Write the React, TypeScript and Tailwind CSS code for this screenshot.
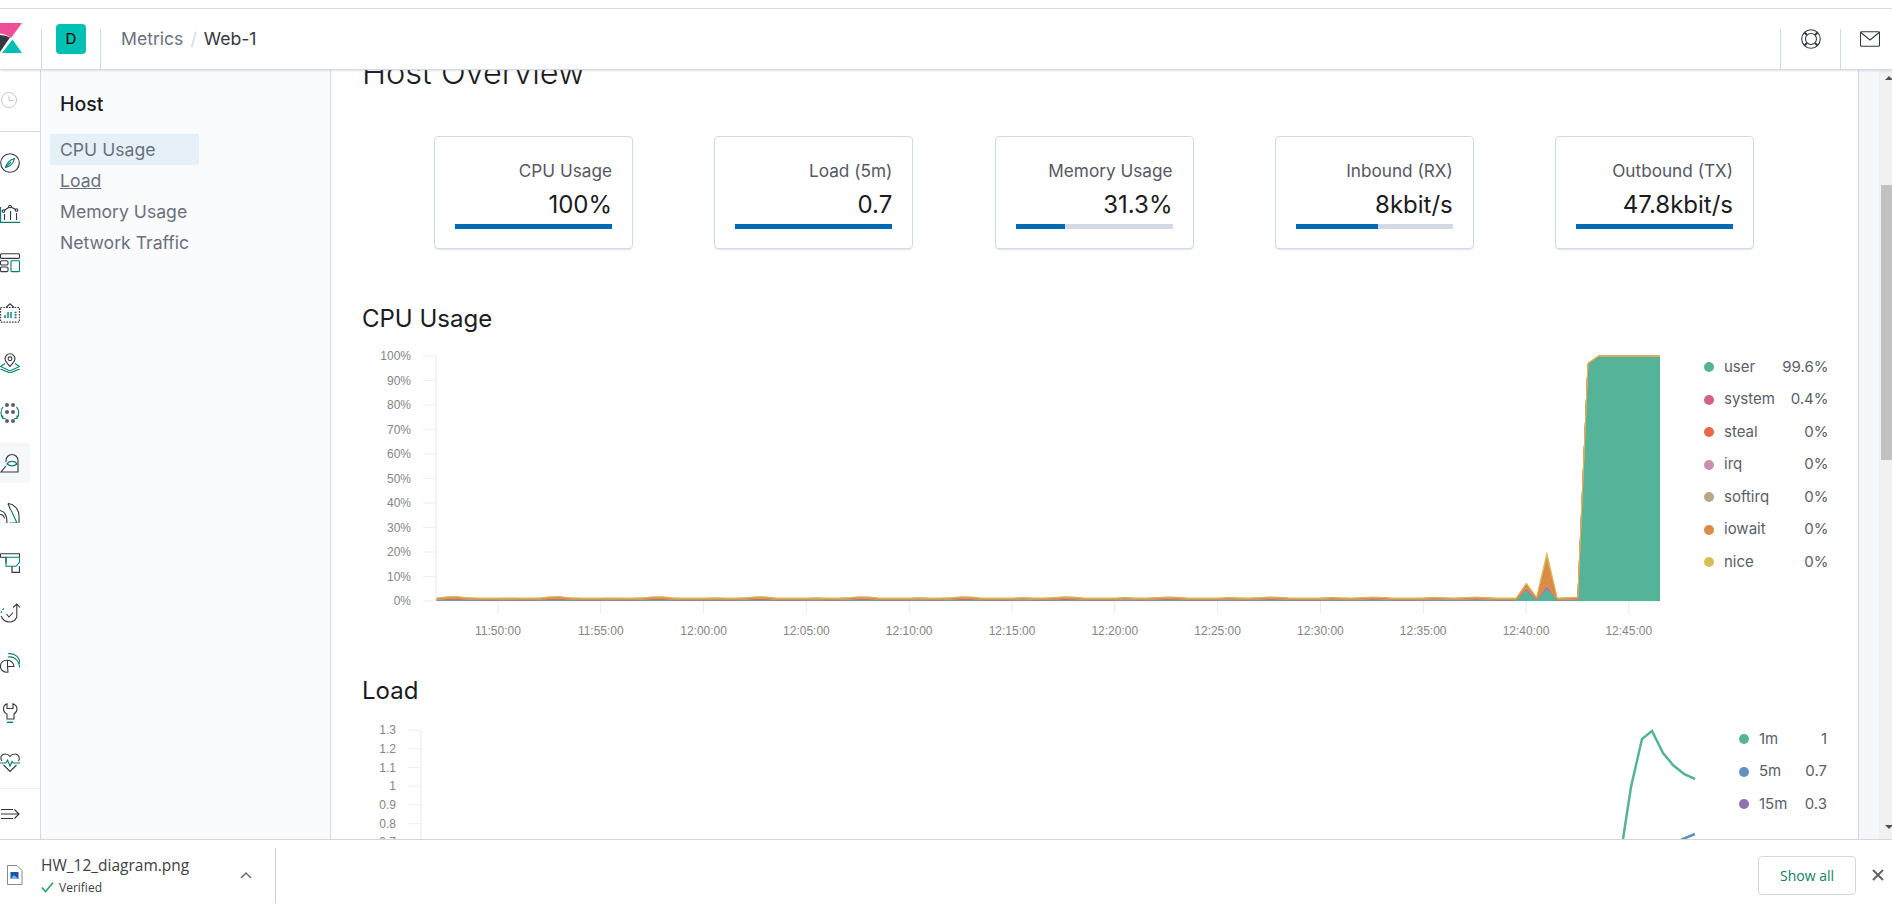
import React from "react";

const D = "#343741";
const T = "#017D73";

function Ico({ children, size = 20 }: { children: React.ReactNode; size?: number }) {
  return (
    <svg width={size} height={size} viewBox="0 0 20 20" fill="none" stroke={D} strokeWidth={1.1}>
      {children}
    </svg>
  );
}

const navIcons: React.ReactNode[] = [
  <Ico key="discover">
    <circle cx="10" cy="10" r="9.3" />
    <path d="M14.5 5.5C10.5 6.5 7 9.5 5.5 14.5 10 13.5 13.5 10.5 14.5 5.5Z" stroke={T} />
    <path d="M5.5 14.5 11 9" stroke={T} />
  </Ico>,
  <Ico key="viz">
    <path d="M.6 4v15.4H20" stroke={T} />
    <path d="M3.5 8 10 3.5 16.5 7" />
    <circle cx="3.5" cy="8" r="1.3" fill="#fff" />
    <circle cx="10" cy="3.5" r="1.3" fill="#fff" />
    <circle cx="16.5" cy="7" r="1.3" fill="#fff" />
    <path d="M4.5 11v6M10.5 8v9M16.500 10v7" />
  </Ico>,
  <Ico key="dash">
    <rect x=".5" y=".8" width="19" height="4.6" rx="1.2" />
    <rect x=".5" y="7.8" width="7.5" height="4.2" rx="1.2" />
    <rect x=".5" y="14" width="7.5" height="4.6" rx="1.2" />
    <rect x="11" y="7.8" width="8.5" height="10.8" rx=".8" stroke={T} />
  </Ico>,
  <Ico key="canvas">
    <path d="M.6 4.5h18.8v14.6H.6Z" strokeDasharray="1.6 1.2" />
    <path d="M6 4.5 10 .8l4 3.7" />
    <path d="M5 15v-3M8 15V9M11 15v-6M14.5 9.5h2M14.5 12h2M14.5 14.500h2" stroke={T} strokeWidth={1.4} />
  </Ico>,
  <Ico key="maps">
    <path d="M10 13.500C7.500 10.500 5 8.500 5 5.800a5 5 0 0 1 10 0c0 2.700-2.500 4.700-5 7.700Z" />
    <circle cx="10" cy="5.800" r="1.900" />
    <path d="m5 10.500-4.500 3L10 18l9.500-4.500-4.500-3" stroke={T} />
    <path d="m.5 16 9.500 4 9.500-4" stroke={T} />
  </Ico>,
  <Ico key="ml">
    <g fill="#5a5f69" stroke="none">
      <circle cx="7" cy="2" r="2" />
      <circle cx="13" cy="2" r="2" />
      <circle cx="7" cy="9" r="2" />
      <circle cx="13" cy="9" r="2" />
      <circle cx="7" cy="18" r="2" />
      <circle cx="13" cy="18" r="2" />
    </g>
    <path d="M3 4C.5 7 .2 12 2.800 15.500m0-3v3h3M16.500 4c2.800 3 3 8 .5 11.500m0-3v3h-3" stroke={T} />
  </Ico>,
  <Ico key="metrics">
    <path d="M6 9V7.500a6 6 0 0 1 12 0V19H1L6 13" />
    <path d="M7 11C9 7.500 15 7.500 17 11 14 13.200 10 13.200 7 11Z" stroke={T} strokeWidth={1.3} />
  </Ico>,
  <Ico key="logs">
    <path d="M8 .5C14 1 19 6 19 13V20" />
    <path d="M8 .5 10.500 7" />
    <path d="M11 7 17 20H9.500" stroke={T} />
    <path d="M0 7.500C4 8 7 12 7 20M0 11.500C2.500 11.500 4 13 4.500 15.500" />
  </Ico>,
  <Ico key="apm">
    <path d="M.5.800h19v3.500M.5.800v3.500h5.500v6" />
    <path d="M6 4.300h13.500v5l-3.500 4H6Z" stroke={T} />
    <path d="M12 13.500v5.800h7.500v-6" strokeWidth={1.2} />
  </Ico>,
  <Ico key="uptime">
    <path d="M4 5.500A8 8 0 0 0 1 10" stroke={T} strokeDasharray="2 1.500" />
    <path d="M1.200 13c1.300 3.600 4.500 6 8.300 6 3.500 0 6-2 7.300-5" />
    <path d="M16.800 14V1M13 4.500 16.800 1l3.200 3.500" />
    <path d="m6.500 11 2.500 3 4-4.500" />
  </Ico>,
  <Ico key="siem">
    <path d="M7.500 7.300A6 6 0 1 0 8 19l-.5-5.500H14A6.300 6.300 0 0 0 7.500 7.300Z" />
    <path d="M7.500 7.500V14" />
    <path d="M8 4c6-1 11 3 11.700 10.500M8 .800C15-.5 20 5 20 11" stroke={T} />
  </Ico>,
  <Ico key="dev">
    <path d="M7 .800V5.500h6V.800c2 .8 4 2.700 4 5.200 0 2.500-1.500 4-3 5v5H7v-5C5 10 3.500 8.500 3.500 6 3.500 3.500 5 1.500 7 .800Z" />
    <path d="M7 19.300h6" stroke={T} strokeWidth={1.400} />
  </Ico>,
  <Ico key="heart">
    <path d="M1.800 8C-.5 4 2 1 5 1c2 0 4 1 5 2.500C11 2 13 1 15 1c3 0 5.500 3 3.500 7M3.500 12l6.500 6.500 6.500-6.500" />
    <path d="M0 10h6l1.500-3 2.500 6 2-4.500 1 1.500h7" stroke={T} />
  </Ico>,
];

const W = 10.28;
function band(i: number) {
  const w = Math.max(0, Math.sin(i * 0.95) * Math.sin(i * 0.31));
  return [0.3, 0.18 + w * 0.2, 0.08 + w * 0.3, 0.04, 0.06, 0.35 + w * 0.15, 0.2];
}
function cpuData() {
  const rows: { x: number; v: number[] }[] = [];
  for (let k = 119; k >= 0; k--) {
    const x = 1660 - W * k;
    let v = band(k);
    if (k <= 7) v = k === 7 ? [96.400, 0.3, 0, 0, 0.1, 0.2, 0.2] : [99.600, 0.3, 0, 0, 0, 0, 0.1];
    if (k === 11) v = [5, 1.1, 0.1, 0.1, 0.1, 11.300, 2];
    if (k === 13) v = [4.300, 0.7, 0.1, 0.1, 0.1, 1.500, 0.6];
    rows.push({ x, v });
  }
  return rows;
}
const cols = ["#54B399", "#D36086", "#E7664C", "#CA8EAE", "#B9A888", "#DA8B45", "#D6BF57"];

function CpuChart() {
  const rows = cpuData();
  const y = (p: number) => 601 - p * 2.45;
  const layers = cols.map((c, s) => {
    const sum = (r: { v: number[] }, n: number) => r.v.slice(0, n).reduce((a, b) => a + b, 0);
    const top = rows.map((r) => `${r.x.toFixed(1)},${y(sum(r, s + 1)).toFixed(1)}`);
    const bot = rows.map((r) => `${r.x.toFixed(1)},${y(sum(r, s)).toFixed(1)}`).reverse();
    return (
      <g key={c}>
        <polygon points={[...top, ...bot].join(" ")} fill={c} />
        <polyline points={top.join(" ")} fill="none" stroke={c} strokeWidth={1} />
      </g>
    );
  });
  const times = ["11:50:00", "11:55:00", "12:00:00", "12:05:00", "12:10:00", "12:15:00", "12:20:00", "12:25:00", "12:30:00", "12:35:00", "12:40:00", "12:45:00"];
  return (
    <svg width="1338" height="300" viewBox="362 340 1338 300" className="shrink-0">
      <path d="M436 356V601H1660" stroke="#f0f0f0" strokeWidth={1.500} fill="none" />
      {Array.from({ length: 11 }).map((_, i) => {
        const yy = 601 - i * 24.5;
        return (
          <g key={i}>
            <path d={`M423 ${yy}H436`} stroke="#f0f0f0" strokeWidth={1.200} />
            <text x="411" y={yy + 4} textAnchor="end" fontSize="12" fill="#858585" fontFamily="Liberation Sans">{`${i * 10}%`}</text>
          </g>
        );
      })}
      {times.map((t, i) => {
        const x = 498 + i * 102.8;
        return (
          <g key={t}>
            <path d={`M${x} 601V613`} stroke="#eaeaea" strokeWidth={1} />
            <text x={x} y="635" textAnchor="middle" fontSize="12" fill="#858585" fontFamily="Liberation Sans">{t}</text>
          </g>
        );
      })}
      {layers}
    </svg>
  );
}

function LoadChart() {
  const ticks = ["0.7", "0.8", "0.9", "1", "1.1", "1.2", "1.3"];
  return (
    <svg width="1338" height="130" viewBox="362 720 1338 130" className="shrink-0">
      <path d="M421 730V850" stroke="#f0f0f0" strokeWidth={1.500} fill="none" />
      {ticks.map((t, i) => {
        const yy = 842.300 - i * 18.7;
        return (
          <g key={t}>
            <path d={`M408 ${yy}H421`} stroke="#f0f0f0" strokeWidth={1.200} />
            <text x="396" y={yy + 4} textAnchor="end" fontSize="12" fill="#858585" fontFamily="Liberation Sans">{t}</text>
          </g>
        );
      })}
      <polyline points="1621,850 1623,839 1631,787 1642,739 1652,731 1663,753 1673,765 1684,774 1695,779" fill="none" stroke="#54B399" strokeWidth={2.5} />
      <polyline points="1662,850 1673,844 1683,839 1695,834" fill="none" stroke="#6092C0" strokeWidth={2.5} />
    </svg>
  );
}

function Legend({ rows, className }: { rows: [string, string, string][]; className: string }) {
  return (
    <div className={`flex flex-col shrink-0 text-[15px] text-[#5a5e68] ${className}`}>
      {rows.map(([c, n, v]) => (
        <div key={n} className="flex items-center h-[32.5px]">
          <span className="w-[10px] h-[10px] rounded-full mr-[10px] shrink-0" style={{ backgroundColor: c }} />
          <span>{n}</span>
          <span className="ml-auto">{v}</span>
        </div>
      ))}
    </div>
  );
}

function Card({ label, value, pct }: { label: string; value: string; pct: number }) {
  return (
    <div className="w-[199px] h-[113px] shrink-0 border border-[#d3dae6] rounded-[4px] bg-white shadow-[0_2px_2px_-1px_rgba(152,162,179,0.3)] pl-[20px] pr-[20px] pt-[23px] flex flex-col items-end">
      <div className="text-[17.2px] leading-[22px] text-[#545863]">{label}</div>
      <div className="text-[24px] leading-[30px] mt-[8px] text-[#1a1c21]">{value}</div>
      <div className="w-full h-[5px] mt-[4px] shrink-0 bg-[#d3dae6]">
        <div className="h-full bg-[#006bb4]" style={{ width: `${pct}%` }} />
      </div>
    </div>
  );
}

export default function App() {
  return (
    <div className="w-[1892px] h-[910px] flex flex-col overflow-hidden bg-white font-['Inter',sans-serif]">
      <div className="h-[9px] shrink-0 border-b border-[#dddddd] bg-white" />
      {/* header */}
      <header className="h-[61px] shrink-0 flex bg-white border-b border-[#d3dae6] shadow-[0_2px_2px_-1px_rgba(152,162,179,0.3)] relative z-10">
        <div className="w-[41px] h-[60px] shrink-0 relative overflow-hidden">
          <svg width="24" height="32" viewBox="0 23 24 32" className="mt-[14px]">
            <path d="M0 23H22L11 38Q6 34 0 33.500Z" fill="#F04E98" />
            <path d="M0 35Q6 35 10 37.500L0 52Z" fill="#343741" />
            <path d="M12.500 39.500 22 53H2Z" fill="#00BFB3" />
          </svg>
        </div>
        <div className="w-[60px] shrink-0 mt-[20px] border-l border-r border-[#d3dae6] relative">
          <div className="absolute left-[14px] -top-[5px] w-[30px] h-[30px] rounded-[4px] bg-[#00BFB3] flex items-center justify-center text-[15px] text-black">D</div>
        </div>
        <div className="flex items-center text-[17.6px] pl-[20px] pt-[1px] h-[60px]">
          <span className="text-[#69707d]">Metrics</span>
          <span className="text-[#d3dae6] mx-[7px]">/</span>
          <span className="text-[#343741]">Web-1</span>
        </div>
        <div className="ml-auto flex mt-[20px]">
          <div className="w-[60px] h-[40px] border-l border-[#d3dae6] flex justify-center">
            <svg width="20" height="20" viewBox="0 0 20 20" fill="none" stroke={D} strokeWidth={1.100}>
              <circle cx="10" cy="10" r="9.300" />
              <circle cx="10" cy="10" r="5.500" />
              <path d="M3.500 3.500 6 6M16.500 3.500 14 6M3.500 16.500 6 14M16.500 16.500 14 14" strokeWidth={2} />
            </svg>
          </div>
          <div className="w-[52px] h-[40px] border-l border-[#d3dae6] flex justify-start pl-[19px]">
            <svg width="20" height="16" viewBox="0 0 20 16" fill="none" stroke={D} strokeWidth={1.100} className="mt-[2px]">
              <rect x=".5" y=".8" width="19" height="14.400" rx="1" />
              <path d="M.8 1.500 10 9l9.200-7.500" />
            </svg>
          </div>
        </div>
      </header>

      {/* body */}
      <div className="flex-1 min-h-0 flex">
        {/* nav */}
        <nav className="w-[41px] shrink-0 bg-white border-r border-[#d3dae6] flex flex-col">
          <div className="h-[62px] shrink-0 border-b border-[#d3dae6] flex items-center">
            <svg width="16" height="16" viewBox="0 0 16 16" fill="none" stroke="#c4c6ca" strokeWidth={1} className="ml-[1px] mt-[-1px]">
              <circle cx="8" cy="8" r="7.500" />
              <path d="M8 3.500V8.500H12" />
            </svg>
          </div>
          <div className="h-[6px] shrink-0" />
          <div className="flex flex-col h-[650px] shrink-0">
            {navIcons.map((ic, i) => (
              <div key={i} className="h-[50px] flex items-center shrink-0">
                <div className={`w-[30px] h-[40px] flex items-center rounded-r-[4px] ${i === 6 ? "bg-[#f5f7fa]" : ""}`}>{ic}</div>
              </div>
            ))}
          </div>
          <div className="h-[50px] shrink-0 border-t border-[#eef1f5] flex items-center">
            <svg width="20" height="14" viewBox="0 0 20 14" fill="none" stroke={D} strokeWidth={1.100}>
              <path d="M1 2.500H13M1 7H18.500M1 11.500H13M14.500 2.500 19 7l-4.500 4.500" />
            </svg>
          </div>
        </nav>

        {/* sub nav */}
        <aside className="w-[290px] shrink-0 bg-[#fafbfd] border-r border-[#d3dae6] pl-[9px] pt-[22px]">
          <div className="pl-[10px] text-[19.5px] leading-[24px] font-medium text-[#1a1c21] mb-[18px]">Host</div>
          <div className="flex flex-col text-[17.6px] text-[#69707d]">
            <div className="w-[149px] h-[31px] pl-[10px] pt-[1px] flex items-center bg-[#e6f0f8] whitespace-nowrap">CPU Usage</div>
            <div className="w-[149px] h-[31px] pl-[10px] pt-[1px] flex items-center underline">Load</div>
            <div className="w-[149px] h-[31px] pl-[10px] pt-[1px] flex items-center whitespace-nowrap">Memory Usage</div>
            <div className="w-[149px] h-[31px] pl-[10px] pt-[1px] flex items-center whitespace-nowrap">Network Traffic</div>
          </div>
        </aside>

        {/* main */}
        <main className="flex-1 min-w-0 bg-white overflow-hidden pl-[31px]">
          <h1 className="-mt-[17px] h-[40px] text-[32.5px] leading-[40px] font-light text-[#1a1c21] whitespace-nowrap">Host Overview</h1>
          <div className="flex gap-[81.250px] ml-[72px] mt-[43px]">
            <Card label="CPU Usage" value="100%" pct={100} />
            <Card label="Load (5m)" value="0.7" pct={100} />
            <Card label="Memory Usage" value="31.3%" pct={31.300} />
            <Card label="Inbound (RX)" value="8kbit/s" pct={52.500} />
            <Card label="Outbound (TX)" value="47.8kbit/s" pct={100} />
          </div>
          <h2 className="mt-[54px] h-[32px] text-[24px] leading-[32px] font-normal text-[#1a1c21]">CPU Usage</h2>
          <div className="flex mt-[5px] h-[300px]">
            <CpuChart />
            <Legend
              className="ml-[4px] w-[124.500px] pt-[10.750px]"
              rows={[
                ["#54B399", "user", "99.6%"],
                ["#D36086", "system", "0.4%"],
                ["#E7664C", "steal", "0%"],
                ["#CA8EAE", "irq", "0%"],
                ["#B9A888", "softirq", "0%"],
                ["#DA8B45", "iowait", "0%"],
                ["#D6BF57", "nice", "0%"],
              ]}
            />
          </div>
          <h2 className="mt-[35px] h-[32px] text-[24px] leading-[32px] font-normal text-[#1a1c21]">Load</h2>
          <div className="flex mt-[13px] h-[130px]">
            <LoadChart />
            <Legend
              className="ml-[39px] w-[88px] pt-[2.750px]"
              rows={[
                ["#54B399", "1m", "1"],
                ["#6092C0", "5m", "0.7"],
                ["#9170B8", "15m", "0.3"],
              ]}
            />
          </div>
        </main>

        {/* gutter and scrollbar */}
        <div className="w-[21px] shrink-0 bg-[#f5f7fa] border-l border-[#d3dae6]" />
        <div className="w-[13px] shrink-0 bg-[#f1f1f1] flex flex-col pl-[2px]">
          <div className="h-[5px] shrink-0" />
          <div className="h-0 w-0 ml-[4px] mt-[1px] border-x-[4px] border-x-transparent border-b-[4px] border-b-[#505050]" />
          <div className="h-[105px] shrink-0" />
          <div className="h-[275px] shrink-0 bg-[#c1c1c1]" />
          <div className="flex-1" />
          <div className="h-0 w-0 ml-[4px] border-x-[4px] border-x-transparent border-t-[4px] border-t-[#505050] mb-[10px]" />
        </div>
      </div>

      {/* downloads bar */}
      <footer className="h-[71px] shrink-0 bg-white border-t border-[#d5d5d5] relative z-10 flex items-center font-['Open_Sans',sans-serif]">
        <svg width="16" height="20" viewBox="0 0 16 20" className="ml-[7px] shrink-0">
          <path d="M.5.500H10L15 5.500V19.500H.5Z" fill="#fff" stroke="#8a8a8a" />
          <rect x="3.500" y="7" width="8" height="7" fill="#1557b0" />
          <path d="M3.500 14 7 10l4.500 4Z" fill="#7fb2e5" />
        </svg>
        <div className="ml-[18px] w-[200px] flex flex-col">
          <div className="text-[15.5px] leading-[20px] text-[#3c4043] whitespace-nowrap">HW_12_diagram.png</div>
          <div className="flex items-center text-[12px] leading-[16px] mt-[5px] text-[#3c4043]">
            <svg width="13" height="11" viewBox="0 0 13 11" fill="none" stroke="#1ea362" strokeWidth={1.500} className="mr-[5px]">
              <path d="M.8 5.500 4.500 9.500 12 .8" />
            </svg>
            Verified
          </div>
        </div>
        <svg width="12" height="8" viewBox="0 0 12 8" fill="none" stroke="#6b6b6b" strokeWidth={1.500} className="shrink-0 ml-[-1px]">
          <path d="M1 7l5-5 5 5" />
        </svg>
        <div className="w-px h-[55px] bg-[#cfcfcf] ml-[23px]" />
        <div className="ml-auto w-[98px] h-[39px] rounded-[4px] border border-[#d5d7da] flex items-center justify-center text-[14px] text-[#0f7f6a] font-medium">Show all</div>
        <svg width="12" height="12" viewBox="0 0 12 12" fill="none" stroke="#5f6368" strokeWidth={2} className="ml-[16px] mr-[8px] shrink-0">
          <path d="M1 1l10 10M11 1 1 11" />
        </svg>
      </footer>
    </div>
  );
}
